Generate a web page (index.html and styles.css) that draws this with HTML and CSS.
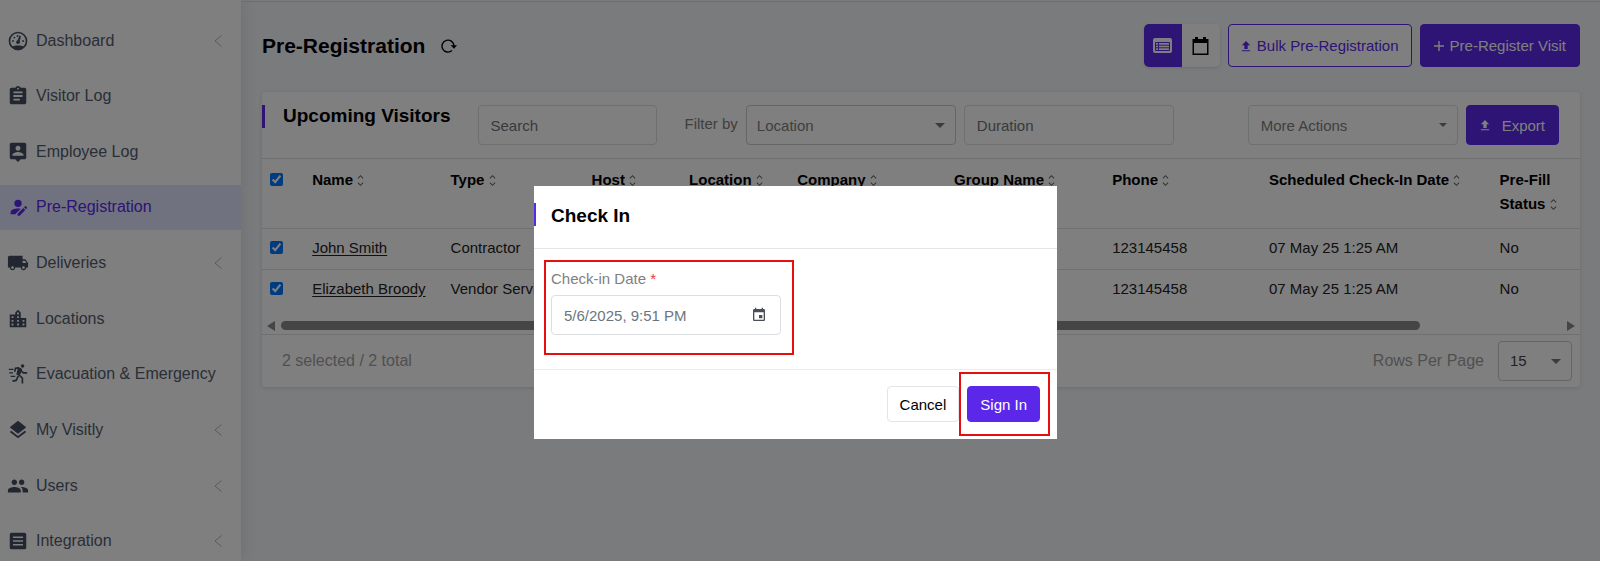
FILE: index.html
```html
<!DOCTYPE html>
<html lang="en">
<head>
<meta charset="utf-8">
<title>Pre-Registration</title>
<link rel="stylesheet" href="styles.css">
</head>
<body>
<svg class="sprite" aria-hidden="true">
  <symbol id="sort" viewBox="0 0 8 14"><path d="M1 4.500l3-3 3 3M1 9.500l3 3 3-3" fill="none" stroke="currentColor" stroke-width="1.200"/></symbol>
  <symbol id="chevron" viewBox="0 0 8 14"><path d="M7.500 1.500L1 7l6.500 5.500" fill="none" stroke="currentColor" stroke-width="1"/></symbol>
  <symbol id="caret" viewBox="0 0 10 5"><path d="M0 0h10L5 5z"/></symbol>
  <symbol id="upload" viewBox="0 0 12 14"><path d="M6 1l5 5H8v4.500H4V6H1zM1 12h10v1.200H1z"/></symbol>
</svg>
<div class="app">
  <aside class="sidebar">
    <nav class="nav">
      <a class="nav-item" href="#"><svg class="nav-icon" viewBox="0 0 24 24"><circle cx="12" cy="12" r="9.300" fill="none" stroke="currentColor" stroke-width="1.800"/><path d="M5 18.300C8.500 16.600 15.500 16.600 19 18.300 17 21 14 22 12 22s-5-1-7-3.700z"/><circle cx="12" cy="13.300" r="2"/><path d="M11 13L13.600 6l1.600.5L13.600 13.500z"/><circle cx="6.500" cy="12" r="1"/><circle cx="8" cy="8.300" r="1"/><circle cx="17.500" cy="12" r="1"/><circle cx="11.500" cy="6.500" r="1"/></svg><span>Dashboard</span><svg class="nav-chevron"><use href="#chevron"/></svg></a>
      <a class="nav-item" href="#"><svg class="nav-icon" viewBox="0 0 24 24"><path d="M19 3h-4.180C14.400 1.840 13.300 1 12 1c-1.300 0-2.400.84-2.820 2H5c-1.100 0-2 .9-2 2v14c0 1.100.9 2 2 2h14c1.100 0 2-.9 2-2V5c0-1.100-.9-2-2-2zm-7 0c.55 0 1 .45 1 1s-.45 1-1 1-1-.45-1-1 .45-1 1-1zm2 14H7v-2h7v2zm3-4H7v-2h10v2zm0-4H7V7h10v2z"/></svg><span>Visitor Log</span></a>
      <a class="nav-item" href="#"><svg class="nav-icon" viewBox="0 0 24 24"><path d="M19 2H5c-1.110 0-2 .9-2 2v14c0 1.100.89 2 2 2h4l3 3 3-3h4c1.100 0 2-.9 2-2V4c0-1.100-.9-2-2-2zm-7 3.300c1.490 0 2.700 1.210 2.700 2.700 0 1.490-1.210 2.700-2.700 2.700-1.490 0-2.700-1.210-2.700-2.700 0-1.490 1.210-2.700 2.700-2.700zM18 16H6v-.9c0-2 4-3.100 6-3.100s6 1.100 6 3.100v.9z"/></svg><span>Employee Log</span></a>
      <a class="nav-item active" href="#" aria-current="page"><svg class="nav-icon" viewBox="0 0 24 24"><circle cx="12" cy="8" r="4"/><path d="M4 20v-2.500c0-2.800 4.500-4 8-4 1 0 2 .1 3 .3L9.500 19.300v.7zM11.500 21.500v-2.200l6.300-6.300 2.200 2.200-6.300 6.300zM18.600 12.200l1-1c.3-.3.7-.3 1 0l1.200 1.200c.3.300.3.700 0 1l-1 1z"/></svg><span>Pre-Registration</span></a>
      <a class="nav-item" href="#"><svg class="nav-icon" viewBox="0 0 24 24"><path d="M20 8h-3V4H3c-1.100 0-2 .9-2 2v11h2c0 1.660 1.340 3 3 3s3-1.340 3-3h6c0 1.660 1.340 3 3 3s3-1.340 3-3h2v-5l-3-4zM6 18.500c-.83 0-1.500-.67-1.500-1.500s.67-1.500 1.500-1.500 1.500.67 1.500 1.500-.67 1.500-1.500 1.500zm13.500-9l1.960 2.500H17V9.500h2.500zm-1.500 9c-.83 0-1.500-.67-1.500-1.500s.67-1.500 1.500-1.500 1.500.67 1.500 1.500-.67 1.500-1.500 1.500z"/></svg><span>Deliveries</span><svg class="nav-chevron"><use href="#chevron"/></svg></a>
      <a class="nav-item" href="#"><svg class="nav-icon" viewBox="0 0 24 24"><path fill-rule="evenodd" d="M15 11V5l-3-3-3 3v2H3v14h18V11zM5 9h2v2H5zm0 4h2v2H5zm0 4h2v2H5zM11 5h2v2h-2zm0 4h2v2h-2zm0 4h2v2h-2zm0 4h2v2h-2zm6-4h2v2h-2zm0 4h2v2h-2z"/></svg><span>Locations</span></a>
      <a class="nav-item" href="#"><svg class="nav-icon" viewBox="0 0 24 24"><circle cx="17" cy="3.200" r="1.900"/><path d="M8.300 9.500l1-3.700 3-.6 3.200 1.700-2.300 6.300 3.600 3.200v6M15.500 8.500l2.300 2.300h4.200M12.300 14l-2.300 5-4 .8" fill="none" stroke="currentColor" stroke-width="1.800"/><path d="M12 5l4 1.800-2.600 6.700-3.300-1z"/><path d="M2 7h5M2.500 10.800h4M4 14.500h5" fill="none" stroke="currentColor" stroke-width="1.300"/></svg><span>Evacuation &amp; Emergency</span></a>
      <a class="nav-item" href="#"><svg class="nav-icon" viewBox="0 0 24 24"><path d="M11.990 18.540l-7.370-5.730L3 14.070l9 7 9-7-1.630-1.270-7.380 5.740zM12 16l7.360-5.730L21 9l-9-7-9 7 1.630 1.270L12 16z"/></svg><span>My Visitly</span><svg class="nav-chevron"><use href="#chevron"/></svg></a>
      <a class="nav-item" href="#"><svg class="nav-icon" viewBox="0 0 24 24"><path d="M16 11c1.660 0 2.990-1.340 2.990-3S17.660 5 16 5c-1.660 0-3 1.340-3 3s1.340 3 3 3zm-8 0c1.660 0 2.990-1.340 2.990-3S9.660 5 8 5C6.340 5 5 6.340 5 8s1.340 3 3 3zm0 2c-2.330 0-7 1.170-7 3.500V19h14v-2.500c0-2.330-4.670-3.500-7-3.500zm8 0c-.29 0-.62.02-.97.05 1.160.84 1.970 1.970 1.970 3.450V19h6v-2.500c0-2.330-4.670-3.500-7-3.500z"/></svg><span>Users</span><svg class="nav-chevron"><use href="#chevron"/></svg></a>
      <a class="nav-item" href="#"><svg class="nav-icon" viewBox="0 0 24 24"><path fill-rule="evenodd" d="M5 3h14a2 2 0 0 1 2 2v14a2 2 0 0 1-2 2H5a2 2 0 0 1-2-2V5a2 2 0 0 1 2-2zM6.500 7v1.600h11V7zm0 8.400V17h11v-1.600zm0-4.200v1.600h11v-1.600z"/></svg><span>Integration</span><svg class="nav-chevron"><use href="#chevron"/></svg></a>
    </nav>
  </aside>
  <main class="main">
    <header class="page-head">
      <h1 class="page-title">Pre-Registration</h1>
      <button class="refresh" aria-label="Refresh"><svg width="16" height="16" viewBox="0 0 16 16"><path d="M11 12.600A6 6 0 1 1 13 8" fill="none" stroke="currentColor" stroke-width="1.400"/><path d="M9.600 7.200h6.400L13 10.800z"/></svg></button>
      <div class="view-toggle">
        <button class="toggle on" aria-label="List view"><svg width="19" height="15" viewBox="0 0 19 15"><rect width="19" height="15" rx="2"/><path d="M2.500 4.500h14v8h-14zM2.500 7.200h14M2.500 9.800h14" fill="none" stroke="#5b28ea"/><path d="M5.500 4.500v8" stroke="#5b28ea"/></svg></button>
        <button class="toggle" aria-label="Calendar view"><svg width="17" height="18" viewBox="0 0 17 18"><path fill-rule="evenodd" d="M3 0h3v2h5V0h3v2h2.500v16H.5V2H3zM2 6v10.500h13V6z"/></svg></button>
      </div>
      <button class="btn btn-outline"><svg width="10" height="12"><use href="#upload"/></svg>Bulk Pre-Registration</button>
      <button class="btn btn-primary"><svg width="10" height="10" viewBox="0 0 10 10"><path d="M5 0v10M0 5h10" stroke="currentColor" stroke-width="1.400"/></svg>Pre-Register Visit</button>
    </header>
    <section class="card">
      <div class="toolbar">
        <h2 class="card-title">Upcoming Visitors</h2>
        <input class="field search" type="text" placeholder="Search" aria-label="Search">
        <label class="filter-label" for="location">Filter by</label>
        <div class="select-wrap location"><select class="field" id="location"><option>Location</option></select><svg class="caret"><use href="#caret"/></svg></div>
        <input class="field duration" type="text" placeholder="Duration" aria-label="Duration">
        <div class="select-wrap actions"><select class="field" aria-label="More Actions"><option>More Actions</option></select><svg class="caret small"><use href="#caret"/></svg></div>
        <button class="btn btn-primary export"><svg width="10" height="12"><use href="#upload"/></svg>Export</button>
      </div>
      <table class="table">
        <colgroup><col class="c-check"><col class="c-name"><col class="c-type"><col class="c-host"><col class="c-loc"><col class="c-comp"><col class="c-group"><col class="c-phone"><col class="c-date"><col></colgroup>
        <thead><tr>
          <th><input type="checkbox" checked aria-label="Select all"></th>
          <th>Name <svg class="sort"><use href="#sort"/></svg></th>
          <th>Type <svg class="sort"><use href="#sort"/></svg></th>
          <th>Host <svg class="sort"><use href="#sort"/></svg></th>
          <th>Location <svg class="sort"><use href="#sort"/></svg></th>
          <th>Company <svg class="sort"><use href="#sort"/></svg></th>
          <th>Group Name <svg class="sort"><use href="#sort"/></svg></th>
          <th>Phone <svg class="sort"><use href="#sort"/></svg></th>
          <th>Scheduled Check-In Date <svg class="sort"><use href="#sort"/></svg></th>
          <th>Pre-Fill<br>Status <svg class="sort"><use href="#sort"/></svg></th>
        </tr></thead>
        <tbody>
          <tr><td><input type="checkbox" checked aria-label="Select John Smith"></td><td><a href="#">John Smith</a></td><td>Contractor</td><td></td><td></td><td></td><td></td><td>123145458</td><td>07 May 25 1:25 AM</td><td>No</td></tr>
          <tr><td><input type="checkbox" checked aria-label="Select Elizabeth Broody"></td><td><a href="#">Elizabeth Broody</a></td><td>Vendor Servi</td><td></td><td></td><td></td><td></td><td>123145458</td><td>07 May 25 1:25 AM</td><td>No</td></tr>
        </tbody>
      </table>
      <div class="scrollbar" aria-hidden="true">
        <svg width="8" height="10" viewBox="0 0 8 10"><path d="M8 0v10L0 5z"/></svg>
        <div class="track"><div class="thumb"></div></div>
        <svg width="8" height="10" viewBox="0 0 8 10"><path d="M0 0v10l8-5z"/></svg>
      </div>
      <footer class="table-foot">
        <span>2 selected / 2 total</span>
        <label class="rows-label" for="rows">Rows Per Page</label>
        <div class="select-wrap rows"><select class="field" id="rows"><option>15</option></select><svg class="caret"><use href="#caret"/></svg></div>
      </footer>
    </section>
  </main>
</div>
<div class="backdrop">
  <div class="modal" role="dialog" aria-labelledby="modal-title">
    <div class="modal-head"><h2 class="modal-title" id="modal-title">Check In</h2></div>
    <div class="modal-body">
      <div class="date-group">
        <label class="date-label" for="date">Check-in Date <span class="required">*</span></label>
        <div class="date-wrap">
          <input class="field date" id="date" type="text" value="5/6/2025, 9:51 PM">
          <svg class="date-icon" viewBox="0 0 24 24"><path d="M19 3h-1V1h-2v2H8V1H6v2H5c-1.110 0-1.990.9-1.990 2L3 19c0 1.100.89 2 2 2h14c1.100 0 2-.9 2-2V5c0-1.100-.9-2-2-2zm0 16H5V8h14v11zM17 12h-5v5h5z"/></svg>
        </div>
        <span class="highlight highlight-date"></span>
      </div>
    </div>
    <div class="modal-foot">
      <button class="btn btn-cancel">Cancel</button>
      <div class="signin-wrap"><button class="btn btn-primary btn-signin">Sign In</button><span class="highlight highlight-signin"></span></div>
    </div>
  </div>
</div>
</body>
</html>
```
FILE: styles.css
```css
* { box-sizing: border-box; }
html, body { height: 100%; }
body {
  margin: 0;
  overflow: hidden;
  background: #f4f6f9;
  color: #000;
  font-family: "Liberation Sans", Arial, sans-serif;
  font-size: 15px;
}
svg { fill: currentColor; flex: none; }
button, input, select { font: inherit; color: inherit; }
button { cursor: pointer; }
h1, h2 { margin: 0; font-weight: 700; }
.sprite { display: none; }

.app { display: flex; height: 100vh; }

.sidebar {
  flex: none;
  width: 241px;
  background: #fff;
  box-shadow: 2px 0 14px rgba(60, 75, 100, .12);
}
.nav {
  display: flex;
  flex-direction: column;
  justify-content: space-between;
  height: calc(100% + 3px);
  padding-top: 18px;
}
.nav-item {
  display: flex;
  align-items: center;
  height: 45px;
  padding: 0 19px 0 7px;
  gap: 7px;
  color: #545c70;
  font-size: 16px;
  text-decoration: none;
}
.nav-item.active { background: #e2e5ff; color: #5b28ea; }
.nav-icon { width: 22px; height: 22px; color: #434c60; }
.active .nav-icon { color: #5b28ea; }
.nav-chevron { width: 8px; height: 14px; margin-left: auto; color: #aeb4c2; }

.main {
  flex: 1;
  min-width: 0;
  margin-top: 1px;
  padding: 22px 20px 0 21px;
  border-top: 1px solid #dadde2;
}
.page-head { display: flex; align-items: center; gap: 8px; height: 43px; }
.page-title { font-size: 21px; line-height: 24px; }
.refresh { display: flex; margin-left: 8px; margin-right: auto; padding: 0; border: 0; background: none; }

.btn {
  display: flex;
  align-items: center;
  justify-content: center;
  gap: 6px;
  height: 43px;
  padding: 0 13px;
  border: 1px solid #5b28ea;
  border-radius: 4px;
  white-space: nowrap;
}
.btn-primary { background: #5b28ea; color: #fff; }
.btn-outline { padding: 0 12px; background: #fff; color: #5b28ea; }

.view-toggle {
  display: flex;
  height: 43px;
  border-radius: 5px;
  background: #fff;
  overflow: hidden;
  box-shadow: 0 1px 3px rgba(0, 0, 0, .12);
}
.toggle {
  display: flex;
  align-items: center;
  justify-content: center;
  width: 38px;
  padding: 0;
  border: 0;
  background: #fff;
}
.toggle.on { background: #5b28ea; color: #fff; }

.card {
  margin-top: 25px;
  border-radius: 4px;
  background: #fff;
  box-shadow: 0 1px 4px rgba(60, 75, 100, .16);
}
.toolbar {
  display: flex;
  height: 67px;
  padding: 13px 21px 0 0;
  border-bottom: 1px solid #dde0e4;
}
.card-title {
  height: 23px;
  margin-right: 27px;
  padding-left: 18px;
  border-left: 3px solid #5b28ea;
  font-size: 19px;
  line-height: 22px;
}
.field {
  width: 100%;
  height: 40px;
  padding: 0 12px;
  border: 1px solid #dcdee2;
  border-radius: 4px;
  background: transparent;
  color: #6c757d;
  outline: 0;
  appearance: none;
}
.field::placeholder { color: #6c757d; opacity: 1; }
.search { width: 179px; }
.filter-label { margin: 0 8px 0 28px; color: #808080; line-height: 38px; }
.select-wrap { position: relative; }
.select-wrap .field { border-color: #ccc; color: #808080; padding-left: 10px; }
.location { width: 210px; }
.duration { width: 210px; margin-left: 8px; }
.actions { width: 210px; margin-left: auto; }
.actions .field { border-color: #dcdee2; padding-left: 12px; }
.caret { position: absolute; right: 11px; top: 18px; width: 10px; height: 5px; color: #777; }
.caret.small { width: 8px; height: 4px; }
.export { height: 40px; margin-left: 8px; gap: 12px; }

.table { width: 100%; border-collapse: collapse; table-layout: fixed; }
.c-check { width: 3.2%; }
.c-name { width: 10.5%; }
.c-type { width: 10.7%; }
.c-host { width: 7.4%; }
.c-loc { width: 8.2%; }
.c-comp, .c-phone { width: 11.9%; }
.c-group { width: 12%; }
.c-date { width: 17.5%; }
.table th, .table td {
  padding: 7px 0 9px 8px;
  text-align: left;
  vertical-align: top;
  line-height: 24px;
  white-space: nowrap;
}
.table th { height: 69px; padding-top: 9px; border-bottom: 1px solid #dde0e4; }
.table td { color: #222; }
.table tbody tr:first-child td { border-bottom: 1px solid #dde0e4; }
.table a { color: inherit; text-decoration: underline; text-underline-offset: 2px; }
.table input {
  display: block;
  width: 13px;
  height: 13px;
  margin: 5px 0 0;
  accent-color: #0075ff;
}
.sort { width: 7px; height: 13px; vertical-align: -2px; color: #666; }

.scrollbar {
  display: flex;
  align-items: center;
  gap: 6px;
  height: 24px;
  padding: 8px 5px 0;
  color: #8a8a8a;
}
.track { flex: 1; }
.thumb { width: 89%; height: 9px; border-radius: 5px; background: #8a8a8a; }

.table-foot {
  display: flex;
  align-items: center;
  height: 53px;
  padding: 0 8px 0 20px;
  border-top: 1px solid #dde0e4;
  color: #a0a0a0;
  font-size: 16px;
}
.rows-label { margin: 0 14px 0 auto; }
.rows { width: 74px; font-size: 15px; }
.rows .field { color: #444; padding-left: 11px; }

.backdrop {
  position: fixed;
  inset: 0;
  display: flex;
  align-items: flex-start;
  justify-content: center;
  padding: 186px 9px 0 0;
  background: rgba(0, 0, 0, .5);
}
.modal { width: 523px; background: #fff; }
.modal-head { height: 63px; padding-top: 17px; border-bottom: 1px solid #e4e6ea; }
.modal-title {
  height: 23px;
  padding-left: 15px;
  border-left: 2px solid #5b28ea;
  font-size: 19px;
  line-height: 25px;
}
.modal-body { padding: 20px 17px 34px; }
.date-group { position: relative; width: 230px; }
.date-label { display: block; height: 26px; color: #808080; line-height: 20px; }
.required { color: #f33; }
.date-wrap { position: relative; }
.date-icon { position: absolute; right: 14px; top: 12px; width: 16px; height: 16px; color: #4a4f57; }
.modal-foot {
  display: flex;
  justify-content: flex-end;
  gap: 8px;
  padding: 16px 17px 17px;
  border-top: 1px solid #e9ebee;
}
.modal-foot .btn { height: 36px; padding: 0 12px; }
.btn-cancel { border-color: #e4e4e8; background: #fff; }
.signin-wrap { position: relative; }
.highlight { position: absolute; border: 2px solid #e60f0f; pointer-events: none; }
.highlight-date { inset: -9px -13px -20px -7px; }
.highlight-signin { inset: -14px -10px -14px -8px; }
```
